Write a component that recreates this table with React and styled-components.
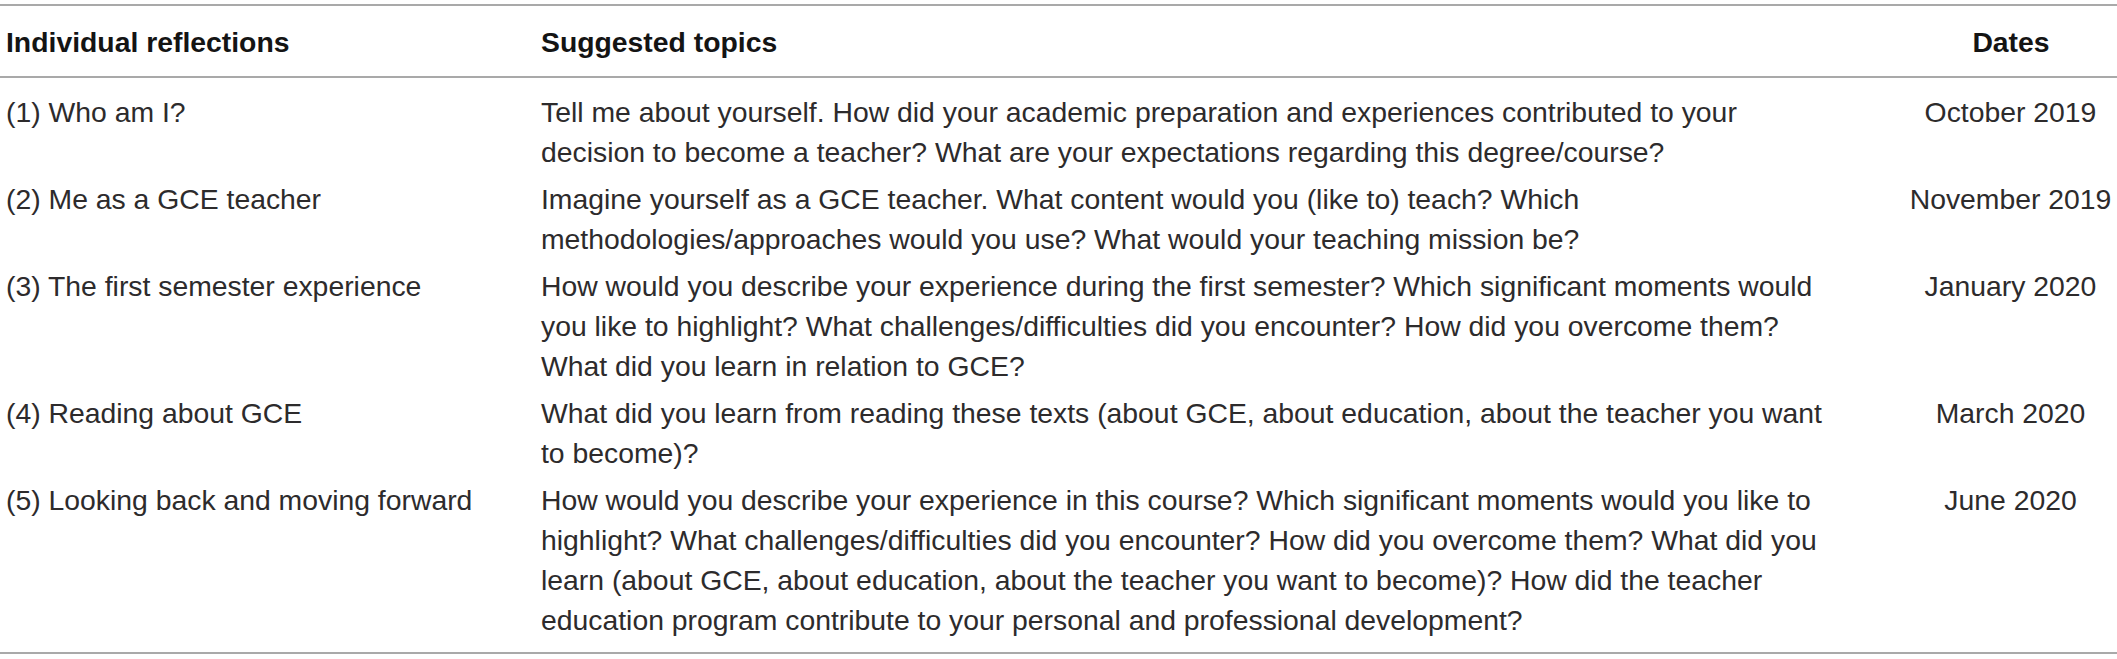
import React from "react";
import styled, { createGlobalStyle } from "styled-components";

const GlobalStyle = createGlobalStyle`
  html, body {
    margin: 0;
    padding: 0;
    background: #ffffff;
  }
  body {
    font-family: "Liberation Sans", Arial, sans-serif;
  }
`;

const Page = styled.div`
  width: 2117px;
  padding-top: 4px;
  background: #ffffff;
`;

const Table = styled.table`
  width: 2117px;
  border-collapse: collapse;
  table-layout: fixed;
  font-family: "Liberation Sans", Arial, sans-serif;
  font-size: 28.35px;
  line-height: 40px;
  color: #2d2b2c;
  border-top: 2px solid #a9a9a9;
  border-bottom: 2px solid #a9a9a9;
`;

const HeadRow = styled.tr`
  border-bottom: 2px solid #a9a9a9;
`;

const HeadCell = styled.th`
  font-weight: 700;
  color: #141414;
  text-align: ${(p) => (p.$center ? "center" : "left")};
  padding: 16px 0 14px ${(p) => (p.$first ? "6px" : "0")};
  vertical-align: top;
  white-space: nowrap;
`;

const BodyRow = styled.tr``;

const Cell = styled.td`
  font-weight: 400;
  text-align: ${(p) => (p.$center ? "center" : "left")};
  vertical-align: top;
  padding-left: ${(p) => (p.$first ? "6px" : "0")};
  padding-top: ${(p) => (p.$top ? "14px" : "4px")};
  padding-bottom: ${(p) => (p.$last ? "12px" : "3px")};
  white-space: nowrap;
`;

const Line = styled.span`
  display: block;
`;

const rows = [
  {
    title: "(1) Who am I?",
    lines: [
      "Tell me about yourself. How did your academic preparation and experiences contributed to your",
      "decision to become a teacher? What are your expectations regarding this degree/course?",
    ],
    date: "October 2019",
  },
  {
    title: "(2) Me as a GCE teacher",
    lines: [
      "Imagine yourself as a GCE teacher. What content would you (like to) teach? Which",
      "methodologies/approaches would you use? What would your teaching mission be?",
    ],
    date: "November 2019",
  },
  {
    title: "(3) The first semester experience",
    lines: [
      "How would you describe your experience during the first semester? Which significant moments would",
      "you like to highlight? What challenges/difficulties did you encounter? How did you overcome them?",
      "What did you learn in relation to GCE?",
    ],
    date: "January 2020",
  },
  {
    title: "(4) Reading about GCE",
    lines: [
      "What did you learn from reading these texts (about GCE, about education, about the teacher you want",
      "to become)?",
    ],
    date: "March 2020",
  },
  {
    title: "(5) Looking back and moving forward",
    lines: [
      "How would you describe your experience in this course? Which significant moments would you like to",
      "highlight? What challenges/difficulties did you encounter? How did you overcome them? What did you",
      "learn (about GCE, about education, about the teacher you want to become)? How did the teacher",
      "education program contribute to your personal and professional development?",
    ],
    date: "June 2020",
  },
];

export default function App() {
  return (
    <>
      <GlobalStyle />
      <Page>
        <Table>
          <colgroup>
            <col style={{ width: "541px" }} />
            <col style={{ width: "1364px" }} />
            <col style={{ width: "212px" }} />
          </colgroup>
          <thead>
            <HeadRow>
              <HeadCell $first>Individual reflections</HeadCell>
              <HeadCell>Suggested topics</HeadCell>
              <HeadCell $center>Dates</HeadCell>
            </HeadRow>
          </thead>
          <tbody>
            {rows.map((r, i) => {
              const top = i === 0;
              const last = i === rows.length - 1;
              return (
                <BodyRow key={r.title}>
                  <Cell $first $top={top} $last={last}>
                    {r.title}
                  </Cell>
                  <Cell $top={top} $last={last}>
                    {r.lines.map((l) => (
                      <Line key={l}>{l}</Line>
                    ))}
                  </Cell>
                  <Cell $center $top={top} $last={last}>
                    {r.date}
                  </Cell>
                </BodyRow>
              );
            })}
          </tbody>
        </Table>
      </Page>
    </>
  );
}
